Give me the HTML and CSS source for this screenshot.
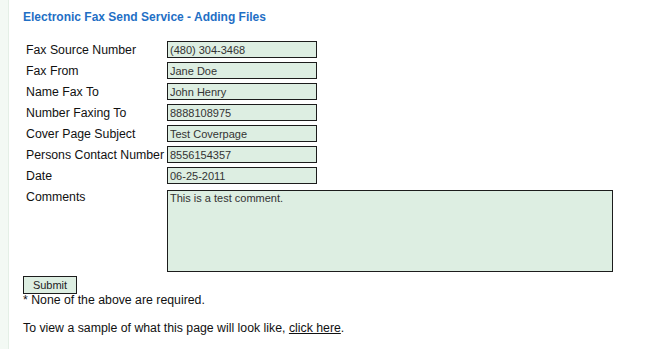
FILE: index.html
```html
<!DOCTYPE html>
<html>
<head>
    <meta charset="utf-8">
    <link rel="stylesheet" href="styles.css">
</head>
<body>

    <div class="page">
        <h1 class="title">Electronic Fax Send Service - Adding Files</h1>

        <form class="fax-form">
            <div class="fields">
                <label>Fax Source Number</label>
                <input type="text" value="(480) 304-3468">

                <label>Fax From</label>
                <input type="text" value="Jane Doe">

                <label>Name Fax To</label>
                <input type="text" value="John Henry">

                <label>Number Faxing To</label>
                <input type="text" value="8888108975">

                <label>Cover Page Subject</label>
                <input type="text" value="Test Coverpage">

                <label>Persons Contact Number</label>
                <input type="text" value="8556154357">

                <label>Date</label>
                <input type="text" value="06-25-2011">

                <label>Comments</label>
                <textarea>This is a test comment.</textarea>
            </div>

            <button type="button" class="submit">Submit</button>
            <p class="note">* None of the above are required.</p>
            <p class="sample">To view a sample of what this page will look like, <a href="#">click here</a>.</p>
        </form>
    </div>

</body>
</html>
```

FILE: styles.css
```css
* {
    margin: 0;
    padding: 0;
    box-sizing: border-box;
}

body {
    font-family: "Liberation Sans", Arial, sans-serif;
    font-size: 12.3px;
    color: #111;
    background-color: #f3f9f4;
}

/* Main content panel */
.page {
    margin-left: 8px;
    min-height: 349px;
    background-color: #fff;
    border-left: 1px solid #e4efe6;
    padding: 10px 0 0 14px;
}

.title {
    font-size: 12px;
    font-weight: bold;
    color: #1f6fc5;
    line-height: 15px;
    margin-bottom: 16px;
}

/* Label / field grid */
.fields {
    display: grid;
    grid-template-columns: 141px auto;
    row-gap: 4px;
    padding-left: 3px;
    align-items: start;
}

.fields label {
    height: 17px;
    line-height: 16px;
    padding-top: 1px;
    white-space: nowrap;
}

.fields input,
.fields textarea {
    font-family: "Liberation Sans", Arial, sans-serif;
    font-size: 11px;
    color: #333;
    background-color: #ddeee2;
    border: 1px solid #1c1c1c;
    padding: 0 2px;
    outline: none;
}

.fields input {
    width: 150px;
    height: 17px;
}

.fields textarea {
    width: 446px;
    height: 82px;
    padding-top: 1px;
    resize: none;
    margin-top: 2px;
}

.submit {
    display: block;
    margin-top: 4px;
    width: 54px;
    height: 18px;
    font-family: "Liberation Sans", Arial, sans-serif;
    font-size: 11px;
    color: #222;
    background-color: #ddeee2;
    border: 1px solid #1c1c1c;
}

.note {
    line-height: 13px;
}

.sample {
    margin-top: 14px;
    line-height: 14px;
}

.sample a {
    color: #111;
}
```
